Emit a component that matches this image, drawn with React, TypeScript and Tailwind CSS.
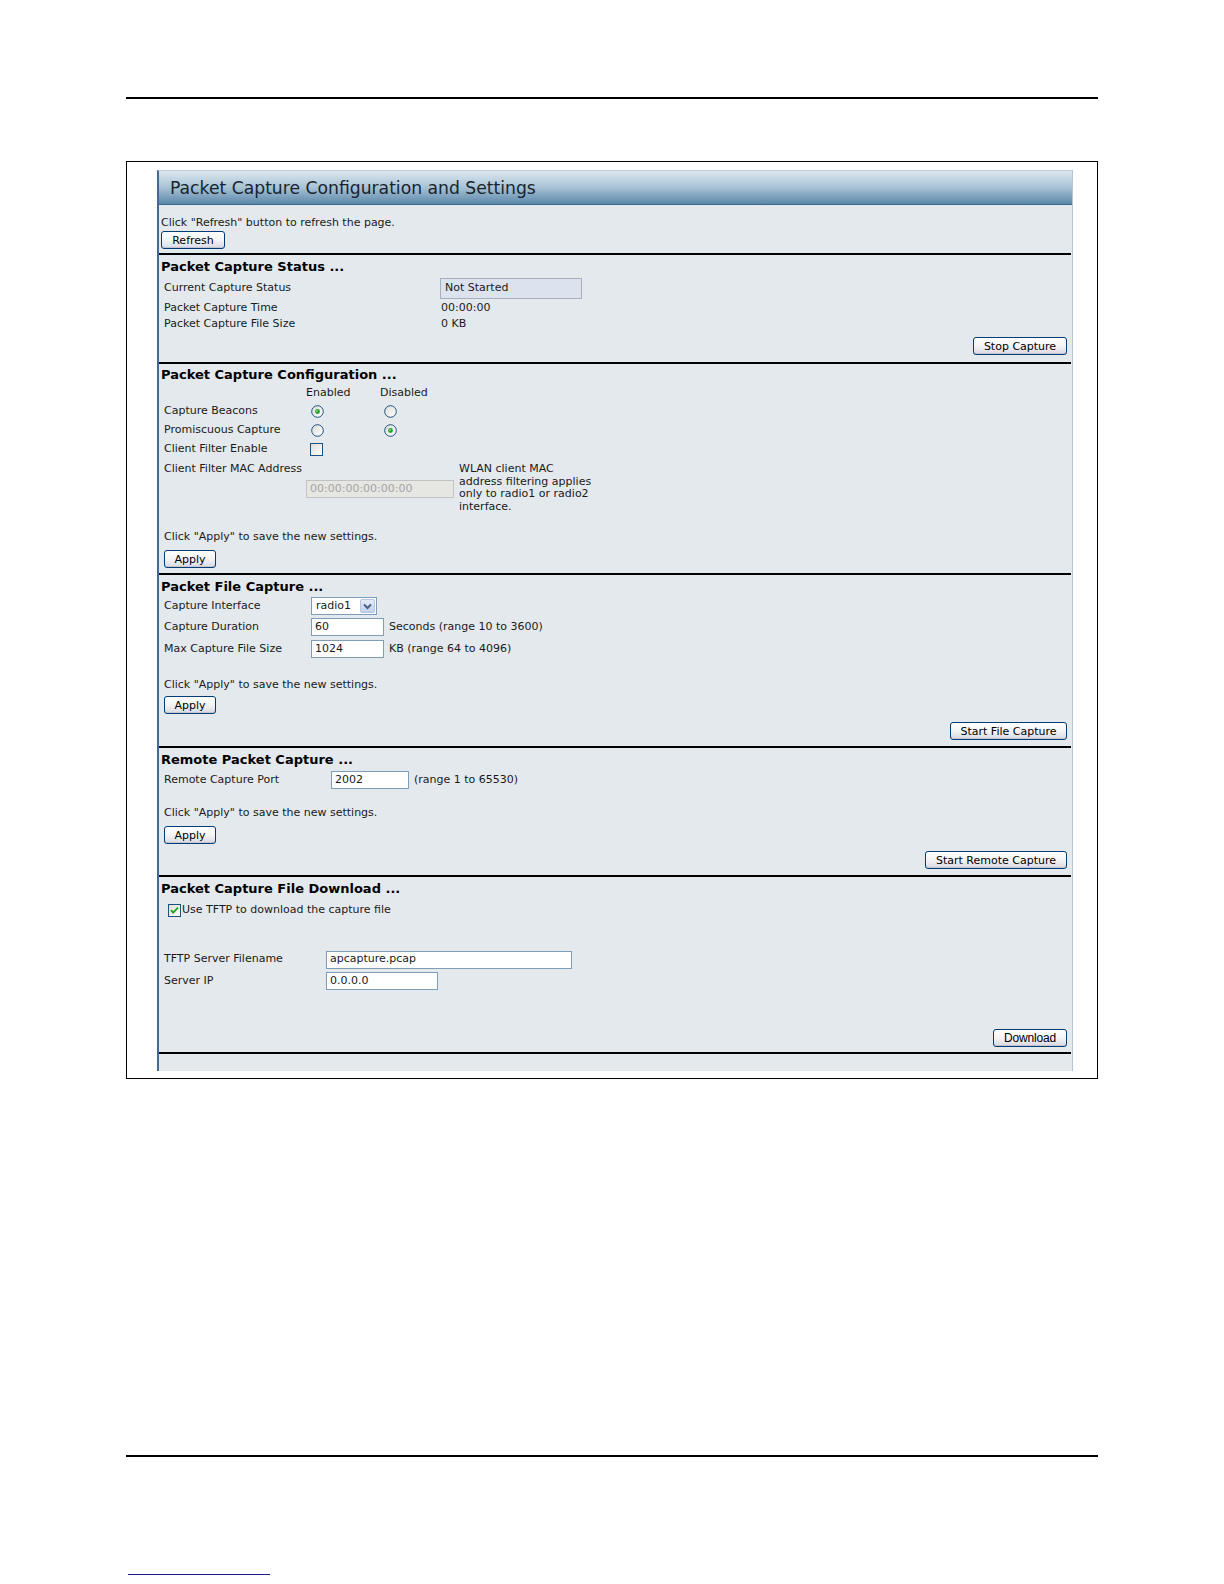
import React from "react";

const body = "font-['DejaVu_Sans',Verdana,sans-serif] text-[11px] text-[#1a1a1a]";

function XpButton({ label, w, narrow }: { label: string; w: string; narrow?: boolean }) {
  return (
    <button
      className={
        "h-[18px] rounded-[3px] border border-[#003c74] bg-linear-to-b from-white via-[#f4f4f6] to-[#d8d8e2] text-black leading-none shadow-[inset_0_-1px_0_#c4c4d2] flex items-center justify-center " +
        w +
        (narrow
          ? " font-['Liberation_Sans',Arial,sans-serif] text-[12px] tracking-[-0.2px]"
          : " font-['DejaVu_Sans',Verdana,sans-serif] text-[11px]")
      }
    >
      {label}
    </button>
  );
}

function Radio({ checked }: { checked?: boolean }) {
  return (
    <svg width="13" height="13" viewBox="0 0 13 13">
      <defs>
        <linearGradient id="rg" x1="0" y1="0" x2="1" y2="1">
          <stop offset="0" stopColor="#dcdcd6" />
          <stop offset="1" stopColor="#ffffff" />
        </linearGradient>
      </defs>
      <circle cx="6.5" cy="6.5" r="5.8" fill="url(#rg)" stroke="#1c5180" strokeWidth="1" />
      {checked && <circle cx="6.5" cy="6.5" r="2.4" fill="#21a121" />}
      {checked && <circle cx="6" cy="6" r="0.9" fill="#8fdc8f" />}
    </svg>
  );
}

function Check({ checked }: { checked?: boolean }) {
  return (
    <svg width="13" height="13" viewBox="0 0 13 13">
      <defs>
        <linearGradient id="cg" x1="0" y1="0" x2="1" y2="1">
          <stop offset="0" stopColor="#dcdcd6" />
          <stop offset="1" stopColor="#ffffff" />
        </linearGradient>
      </defs>
      <rect x="0.5" y="0.5" width="12" height="12" fill="url(#cg)" stroke="#1c5180" />
      {checked && (
        <path d="M3 6.2 L5.2 8.6 L10 3.6" fill="none" stroke="#21a121" strokeWidth="1.8" />
      )}
    </svg>
  );
}

function TextBox({ value, w }: { value: string; w: string }) {
  return (
    <div className={"h-[18px] border border-[#7f9db9] bg-white flex items-center pl-[3px] " + w}>
      {value}
    </div>
  );
}

function Divider() {
  return <div className="h-[2px] bg-black mr-[1px]" />;
}

function Heading({ children }: { children: React.ReactNode }) {
  return (
    <div className="h-[18px] flex items-center pl-[2px] font-['DejaVu_Sans',Verdana,sans-serif] font-bold text-[13px] text-black">
      {children}
    </div>
  );
}

function ApplyBlock({ mt, gap }: { mt: string; gap: string }) {
  return (
    <div className={"pl-[5px] " + mt}>
      <div className="h-[15px] flex items-center">Click "Apply" to save the new settings.</div>
      <div className={"h-[18px] flex " + gap}>
        <XpButton label="Apply" w="w-[52px]" />
      </div>
    </div>
  );
}

function RightButton({ label, w, mt, narrow }: { label: string; w: string; mt: string; narrow?: boolean }) {
  return (
    <div className={"flex justify-end pr-[5px] " + mt}>
      <XpButton label={label} w={w} narrow={narrow} />
    </div>
  );
}

export default function App() {
  return (
    <div className="w-[1224px] h-[1584px] bg-white relative">
      <div className="pt-[97px] pl-[126px]">
        <div className="w-[972px] h-[2px] bg-black" />
      </div>

      {/* framed screenshot */}
      <div className="mt-[62px] ml-[126px] w-[972px] border border-black pt-[8px] pb-[7px] pl-[30px] pr-[24px]">
        <div className={"w-[916px] bg-[#e4e9ed] border-t border-t-[#c3ccd6] border-l-2 border-l-[#48698f] border-r border-r-[#b7c3ce] " + body}>
          {/* title bar */}
          <div className="h-[34px] bg-linear-to-b from-[#dce7ef] via-[#a8c2d5] to-[#5c88aa] border-b border-b-[#3d6a90] flex items-center pl-[11px] pt-[3px]">
            <span className="font-['DejaVu_Sans',Verdana,sans-serif] text-[17.2px] text-[#17242f]">
              Packet Capture Configuration and Settings
            </span>
          </div>

          {/* refresh */}
          <div className="h-[48px] pt-[11px] pl-[2px]">
            <div className="h-[15px] flex items-center">Click "Refresh" button to refresh the page.</div>
            <div className="flex">
              <XpButton label="Refresh" w="w-[64px]" />
            </div>
          </div>
          <Divider />

          {/* status */}
          <div className="h-[107px] pt-[3px]">
            <Heading>Packet Capture Status ...</Heading>
            <div className="h-[24px] flex items-center pl-[5px]">
              <div className="w-[276px]">Current Capture Status</div>
              <div className="w-[142px] h-[21px] bg-[#dde2ef] border border-[#a7b0bc] flex items-center pl-[4px]">
                Not Started
              </div>
            </div>
            <div className="h-[16px] flex items-center pl-[5px]">
              <div className="w-[277px]">Packet Capture Time</div>
              <div>00:00:00</div>
            </div>
            <div className="h-[16px] flex items-center pl-[5px]">
              <div className="w-[277px]">Packet Capture File Size</div>
              <div>0 KB</div>
            </div>
            <RightButton label="Stop Capture" w="w-[94px]" mt="mt-[5px]" />
          </div>
          <Divider />

          {/* configuration */}
          <div className="h-[209px] pt-[2px]">
            <Heading>Packet Capture Configuration ...</Heading>
            <div className="h-[18px] flex items-center pl-[147px]">
              <div className="w-[74px]">Enabled</div>
              <div>Disabled</div>
            </div>
            {[
              ["Capture Beacons", true],
              ["Promiscuous Capture", false],
            ].map(([label, en]) => (
              <div key={label as string} className="h-[19px] flex items-center pl-[5px]">
                <div className="w-[142px]">{label}</div>
                <div className="w-[74px] pl-[5px] flex">
                  <Radio checked={en as boolean} />
                </div>
                <div className="pl-[4px] flex">
                  <Radio checked={!en} />
                </div>
              </div>
            ))}
            <div className="h-[19px] flex items-center pl-[5px]">
              <div className="w-[146px]">Client Filter Enable</div>
              <Check />
            </div>
            <div className="h-[54px] flex pl-[5px]">
              <div className="w-[142px] pt-[3px]">
                <div className="h-[15px] flex items-center">Client Filter MAC Address</div>
              </div>
              <div className="pt-[21px]">
                <div className="w-[148px] h-[18px] border border-[#c2c2c2] bg-[#e6e6e2] text-[#a5a5a5] flex items-center pl-[3px]">
                  00:00:00:00:00:00
                </div>
              </div>
              <div className="ml-[5px] leading-[12.5px] pt-[4px] whitespace-nowrap">
                WLAN client MAC
                <br />
                address filtering applies
                <br />
                only to radio1 or radio2
                <br />
                interface.
              </div>
            </div>
            <ApplyBlock mt="mt-[17px]" gap="mt-[5px]" />
          </div>
          <Divider />

          {/* file capture */}
          <div className="h-[171px] pt-[3px]">
            <Heading>Packet File Capture ...</Heading>
            <div className="h-[20px] flex items-center pl-[5px]">
              <div className="w-[147px]">Capture Interface</div>
              <div className="w-[66px] h-[18px] border border-[#7f9db9] bg-white flex items-center justify-between pl-[4px] pr-[1px]">
                <span>radio1</span>
                <div className="w-[15px] h-[14px] rounded-[2px] border border-[#b5c6e0] bg-linear-to-b from-[#e4ebf8] to-[#c3d2ef] flex items-center justify-center">
                  <svg width="9" height="7" viewBox="0 0 9 7">
                    <path d="M1 1.5 L4.5 5 L8 1.5" fill="none" stroke="#4d6185" strokeWidth="2" />
                  </svg>
                </div>
              </div>
            </div>
            <div className="h-[22px] flex items-center pl-[5px]">
              <div className="w-[147px]">Capture Duration</div>
              <TextBox value="60" w="w-[73px]" />
              <div className="ml-[5px]">Seconds (range 10 to 3600)</div>
            </div>
            <div className="h-[22px] flex items-center pl-[5px]">
              <div className="w-[147px]">Max Capture File Size</div>
              <TextBox value="1024" w="w-[73px]" />
              <div className="ml-[5px]">KB (range 64 to 4096)</div>
            </div>
            <ApplyBlock mt="mt-[18px]" gap="mt-[3px]" />
            <RightButton label="Start File Capture" w="w-[117px]" mt="mt-[8px]" />
          </div>
          <Divider />

          {/* remote capture */}
          <div className="h-[127px] pt-[3px]">
            <Heading>Remote Packet Capture ...</Heading>
            <div className="h-[22px] flex items-center pl-[5px]">
              <div className="w-[167px]">Remote Capture Port</div>
              <TextBox value="2002" w="w-[78px]" />
              <div className="ml-[5px]">(range 1 to 65530)</div>
            </div>
            <ApplyBlock mt="mt-[15px]" gap="mt-[5px]" />
            <RightButton label="Start Remote Capture" w="w-[142px]" mt="mt-[7px]" />
          </div>
          <Divider />

          {/* download */}
          <div className="h-[175px] pt-[3px]">
            <Heading>Packet Capture File Download ...</Heading>
            <div className="mt-[5px] h-[15px] flex items-center pl-[9px]">
              <Check checked />
              <div className="ml-[1px]">Use TFTP to download the capture file</div>
            </div>
            <div className="mt-[31px] h-[21px] flex items-center pl-[5px]">
              <div className="w-[162px]">TFTP Server Filename</div>
              <TextBox value="apcapture.pcap" w="w-[246px]" />
            </div>
            <div className="h-[22px] flex items-center pl-[5px]">
              <div className="w-[162px]">Server IP</div>
              <TextBox value="0.0.0.0" w="w-[112px]" />
            </div>
            <RightButton label="Download" w="w-[74px]" mt="mt-[37px]" narrow />
          </div>
          <Divider />
          <div className="h-[17px]" />
        </div>
      </div>

      <div className="absolute left-[126px] top-[1455px] w-[972px] h-[2px] bg-black" />
      <div className="absolute left-[128px] top-[1574px] w-[142px] h-[1px] bg-[#1c1c8c]" />
    </div>
  );
}
